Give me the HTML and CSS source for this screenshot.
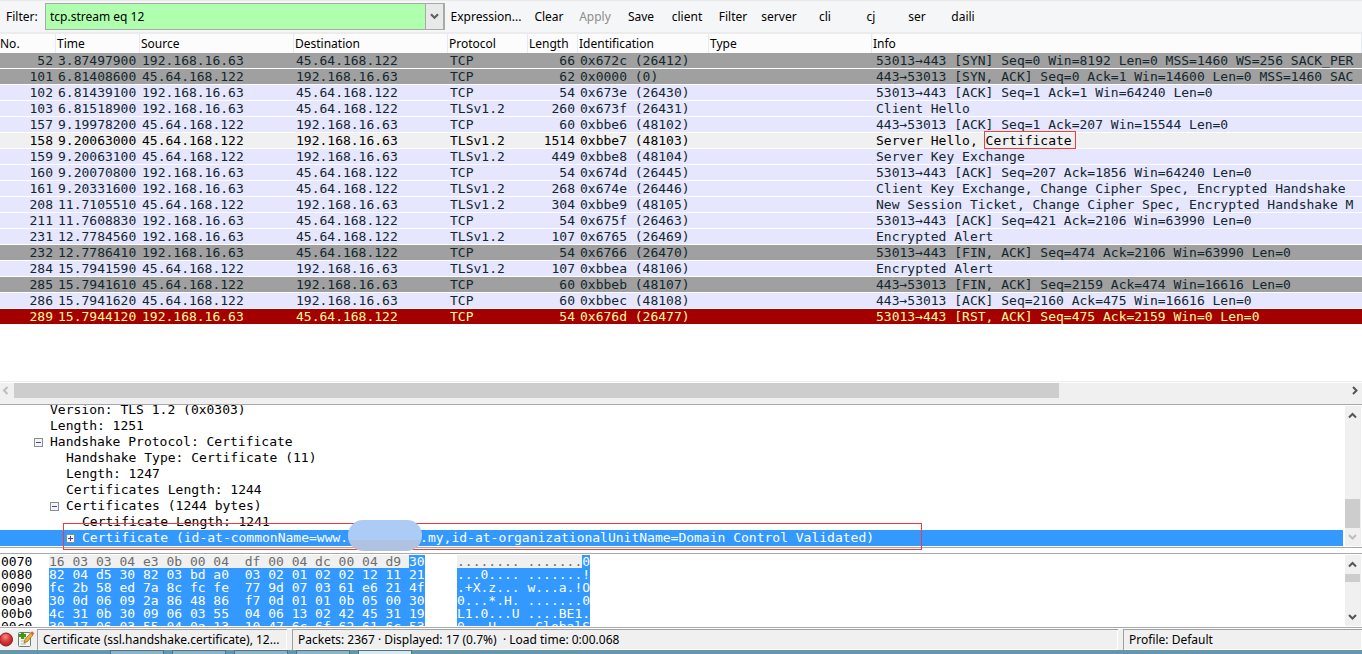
FILE: index.html
```html
<!DOCTYPE html>
<html lang="en">
<head>
<meta charset="utf-8">
<title>Packet capture</title>
<link rel="stylesheet" href="styles.css">
</head>
<body>
<form class="filter-bar">
  <label class="filter-label" for="filter">Filter:</label>
  <div class="combo">
    <input class="combo-input" id="filter" type="text" value="tcp.stream eq 12">
    <button class="combo-toggle" type="button" aria-label="Filter history"><svg width="9" height="7" viewBox="0 0 9 7"><path d="M1 1.2 4.5 4.7 8 1.2" fill="none" stroke="#606060" stroke-width="2.2"/></svg></button>
  </div>
  <div class="filter-actions">
    <button class="action w-expr" type="button">Expression...</button>
    <button class="action w-std" type="button">Clear</button>
    <button class="action w-std" type="button" disabled>Apply</button>
    <button class="action w-std" type="button">Save</button>
    <button class="action w-std" type="button">client</button>
    <button class="action w-std" type="button">Filter</button>
    <button class="action w-std" type="button">server</button>
    <button class="action w-std" type="button">cli</button>
    <button class="action w-std" type="button">cj</button>
    <button class="action w-std" type="button">ser</button>
    <button class="action w-std" type="button">daili</button>
  </div>
</form>

<main class="packets">
  <table class="packet-table">
    <colgroup><col class="c-no"><col class="c-time"><col class="c-addr"><col class="c-addr"><col class="c-proto"><col class="c-len"><col class="c-id"><col class="c-type"><col></colgroup>
    <thead><tr><th>No.</th><th>Time</th><th>Source</th><th>Destination</th><th>Protocol</th><th>Length</th><th>Identification</th><th>Type</th><th>Info</th></tr></thead>
    <tbody>
      <tr class="gray"><td>52</td><td>3.87497900</td><td>192.168.16.63</td><td>45.64.168.122</td><td>TCP</td><td>66</td><td>0x672c (26412)</td><td></td><td>53013→443 [SYN] Seq=0 Win=8192 Len=0 MSS=1460 WS=256 SACK_PER</td></tr>
      <tr class="gray"><td>101</td><td>6.81408600</td><td>45.64.168.122</td><td>192.168.16.63</td><td>TCP</td><td>62</td><td>0x0000 (0)</td><td></td><td>443→53013 [SYN, ACK] Seq=0 Ack=1 Win=14600 Len=0 MSS=1460 SAC</td></tr>
      <tr><td>102</td><td>6.81439100</td><td>192.168.16.63</td><td>45.64.168.122</td><td>TCP</td><td>54</td><td>0x673e (26430)</td><td></td><td>53013→443 [ACK] Seq=1 Ack=1 Win=64240 Len=0</td></tr>
      <tr><td>103</td><td>6.81518900</td><td>192.168.16.63</td><td>45.64.168.122</td><td>TLSv1.2</td><td>260</td><td>0x673f (26431)</td><td></td><td>Client Hello</td></tr>
      <tr><td>157</td><td>9.19978200</td><td>45.64.168.122</td><td>192.168.16.63</td><td>TCP</td><td>60</td><td>0xbbe6 (48102)</td><td></td><td>443→53013 [ACK] Seq=1 Ack=207 Win=15544 Len=0</td></tr>
      <tr class="selected"><td>158</td><td>9.20063000</td><td>45.64.168.122</td><td>192.168.16.63</td><td>TLSv1.2</td><td>1514</td><td>0xbbe7 (48103)</td><td></td><td>Server Hello, <span class="marked">Certificate</span></td></tr>
      <tr><td>159</td><td>9.20063100</td><td>45.64.168.122</td><td>192.168.16.63</td><td>TLSv1.2</td><td>449</td><td>0xbbe8 (48104)</td><td></td><td>Server Key Exchange</td></tr>
      <tr><td>160</td><td>9.20070800</td><td>192.168.16.63</td><td>45.64.168.122</td><td>TCP</td><td>54</td><td>0x674d (26445)</td><td></td><td>53013→443 [ACK] Seq=207 Ack=1856 Win=64240 Len=0</td></tr>
      <tr><td>161</td><td>9.20331600</td><td>192.168.16.63</td><td>45.64.168.122</td><td>TLSv1.2</td><td>268</td><td>0x674e (26446)</td><td></td><td>Client Key Exchange, Change Cipher Spec, Encrypted Handshake</td></tr>
      <tr><td>208</td><td>11.7105510</td><td>45.64.168.122</td><td>192.168.16.63</td><td>TLSv1.2</td><td>304</td><td>0xbbe9 (48105)</td><td></td><td>New Session Ticket, Change Cipher Spec, Encrypted Handshake M</td></tr>
      <tr><td>211</td><td>11.7608830</td><td>192.168.16.63</td><td>45.64.168.122</td><td>TCP</td><td>54</td><td>0x675f (26463)</td><td></td><td>53013→443 [ACK] Seq=421 Ack=2106 Win=63990 Len=0</td></tr>
      <tr><td>231</td><td>12.7784560</td><td>192.168.16.63</td><td>45.64.168.122</td><td>TLSv1.2</td><td>107</td><td>0x6765 (26469)</td><td></td><td>Encrypted Alert</td></tr>
      <tr class="gray"><td>232</td><td>12.7786410</td><td>192.168.16.63</td><td>45.64.168.122</td><td>TCP</td><td>54</td><td>0x6766 (26470)</td><td></td><td>53013→443 [FIN, ACK] Seq=474 Ack=2106 Win=63990 Len=0</td></tr>
      <tr><td>284</td><td>15.7941590</td><td>45.64.168.122</td><td>192.168.16.63</td><td>TLSv1.2</td><td>107</td><td>0xbbea (48106)</td><td></td><td>Encrypted Alert</td></tr>
      <tr class="gray"><td>285</td><td>15.7941610</td><td>45.64.168.122</td><td>192.168.16.63</td><td>TCP</td><td>60</td><td>0xbbeb (48107)</td><td></td><td>443→53013 [FIN, ACK] Seq=2159 Ack=474 Win=16616 Len=0</td></tr>
      <tr><td>286</td><td>15.7941620</td><td>45.64.168.122</td><td>192.168.16.63</td><td>TCP</td><td>60</td><td>0xbbec (48108)</td><td></td><td>443→53013 [ACK] Seq=2160 Ack=475 Win=16616 Len=0</td></tr>
      <tr class="reset"><td>289</td><td>15.7944120</td><td>192.168.16.63</td><td>45.64.168.122</td><td>TCP</td><td>54</td><td>0x676d (26477)</td><td></td><td>53013→443 [RST, ACK] Seq=475 Ack=2159 Win=0 Len=0</td></tr>
    </tbody>
  </table>
</main>

<div class="hscroll">
  <svg class="harrow" width="14" height="15" viewBox="0 0 14 15"><path d="M7.5 4 4 7.5 7.5 11" fill="none" stroke="#bdbdbd" stroke-width="2"/></svg>
  <div class="htrack"><div class="hthumb"></div></div>
  <svg class="harrow" width="14" height="15" viewBox="0 0 14 15"><path d="M5 4 8.500 7.500 5 11" fill="none" stroke="#555" stroke-width="2"/></svg>
</div>

<section class="details">
  <div class="tree">
    <div class="node l1">Version: TLS 1.2 (0x0303)</div>
    <div class="node l1">Length: 1251</div>
    <div class="node l1 branch"><button class="expander" type="button" aria-label="Collapse"></button>Handshake Protocol: Certificate</div>
    <div class="node l2">Handshake Type: Certificate (11)</div>
    <div class="node l2">Length: 1247</div>
    <div class="node l2">Certificates Length: 1244</div>
    <div class="node l2 branch"><button class="expander" type="button" aria-label="Collapse"></button>Certificates (1244 bytes)</div>
    <div class="node l3">Certificate Length: 1241</div>
    <div class="node l3 branch current"><button class="expander plus" type="button" aria-label="Expand"></button>Certificate (id-at-commonName=www.<span class="redacted"></span>.my,id-at-organizationalUnitName=Domain Control Validated)</div>
  </div>
  <div class="vscroll">
    <svg width="16" height="18" viewBox="0 0 16 18"><path d="M4 11.500 7.500 8 11 11.500" fill="none" stroke="#555" stroke-width="2"/></svg>
    <div class="vtrack end"><div class="vthumb tall"></div></div>
    <svg width="16" height="18" viewBox="0 0 16 18"><path d="M4 7 7.500 10.500 11 7" fill="none" stroke="#bdbdbd" stroke-width="2"/></svg>
  </div>
  <div class="mark-box"></div>
  <div class="smudge"></div>
</section>

<section class="bytes">
  <div class="hex">
<pre class="offsets">0070
0080
0090
00a0
00b0
00c0</pre>
<pre class="dump"><span class="dim">16 03 03 04 e3 0b 00 04  df 00 04 dc 00 04 d9 </span><span class="hl">30</span>
<span class="hl">82 04 d5 30 82 03 bd a0  03 02 01 02 02 12 11 21</span>
<span class="hl">fc 2b 58 ed 7a 8c fc fe  77 9d 07 03 61 e6 21 4f</span>
<span class="hl">30 0d 06 09 2a 86 48 86  f7 0d 01 01 0b 05 00 30</span>
<span class="hl">4c 31 0b 30 09 06 03 55  04 06 13 02 42 45 31 19</span>
<span class="hl">30 17 06 03 55 04 0a 13  10 47 6c 6f 62 61 6c 53</span></pre>
<pre><span class="dim">........ .......</span><span class="hl">0</span>
<span class="hl">...0.... .......!</span>
<span class="hl">.+X.z... w...a.!O</span>
<span class="hl">0...*.H. .......0</span>
<span class="hl">L1.0...U ....BE1.</span>
<span class="hl">0...U... .GlobalS</span></pre>
  </div>
  <div class="vscroll">
    <svg width="16" height="18" viewBox="0 0 16 18"><path d="M4 11.500 7.500 8 11 11.500" fill="none" stroke="#555" stroke-width="2"/></svg>
    <div class="vtrack"><div class="vthumb short"></div></div>
    <svg width="16" height="18" viewBox="0 0 16 18"><path d="M4 7 7.500 10.500 11 7" fill="none" stroke="#555" stroke-width="2"/></svg>
  </div>
</section>

<footer class="status">
  <svg class="status-icons" width="37" height="21" viewBox="0 0 37 21">
    <defs><radialGradient id="led" cx=".45" cy=".3" r=".7"><stop offset="0" stop-color="#f58a8a"/><stop offset=".5" stop-color="#dc3a3c"/><stop offset="1" stop-color="#b81c20"/></radialGradient></defs>
    <circle cx="6" cy="10.500" r="6.500" fill="url(#led)" stroke="#8c1a1c"/>
    <rect x="18.500" y="3.500" width="12" height="14" rx="1" fill="#f4f4ee" stroke="#777"/>
    <path d="M21 9h7M21 12h7M21 15h5" stroke="#b5b5b5"/>
    <path d="M22.500 3v7M19 6.500h7" stroke="#3f9a10" stroke-width="3"/>
    <path d="M24 14l1-3.500 5.500-6.500 2.500 2-5.500 6.500z" fill="#f0b030" stroke="#8a6420" stroke-width=".7"/>
    <path d="M30.500 4 32 2.300l2.300 2L33 6z" fill="#df5a55"/>
  </svg>
  <div class="field field-a">Certificate (ssl.handshake.certificate), 12...</div>
  <div class="field field-b">Packets: 2367 · Displayed: 17 (0.7%) &nbsp;· Load time: 0:00.068</div>
  <div class="field field-c">Profile: Default</div>
</footer>
<div class="taskbar"><i class="task"></i><i class="task"></i><i class="task"></i><i class="task"></i><i class="task active"></i></div>
</body>
</html>
```
FILE: styles.css
```css
* { box-sizing: border-box; }
body {
  margin: 0;
  height: 100vh;
  display: flex;
  flex-direction: column;
  overflow: hidden;
  background: #fff;
  color: #000;
  font: 12px/16px "Noto Sans", "Open Sans", sans-serif;
}
button, input { font: inherit; color: inherit; border: 0; padding: 0; margin: 0; background: none; }
svg { display: block; flex: none; }

.filter-bar { display: flex; align-items: center; height: 34px; padding-left: 6px; background: #f5f6f7; border-top: 1px solid #e8e8e8; border-bottom: 2px solid #ececec; flex: none; }
.filter-label { width: 39px; }
.combo { display: flex; width: 400px; height: 27px; border: 1px solid #a9a9a9; background: #afffaf; }
.combo-input { flex: 1; min-width: 0; padding-left: 4px; }
.combo-toggle { width: 19px; display: flex; align-items: center; justify-content: center; background: #e9e9e9; border-left: 1px solid #a9a9a9; border-right: 1px solid #a9a9a9; }
.filter-actions { display: flex; padding-left: 1px; }
.action { height: 24px; text-align: center; }
.action:disabled { color: #8d8d8d; }
.w-expr { width: 80px; }
.w-std { width: 46px; }

.packets { flex: 1; min-height: 0; overflow: hidden; border-bottom: 1px solid #ececec; }
.packet-table { table-layout: fixed; width: 100%; border-collapse: separate; border-spacing: 0; }
.c-no { width: 56px; }
.c-time { width: 84px; }
.c-addr { width: 154px; }
.c-proto { width: 80px; }
.c-len { width: 50px; }
.c-id { width: 131px; }
.c-type { width: 163px; }
.packet-table th { height: 19px; padding: 0 0 0 1px; font-weight: 400; line-height: 18px; text-align: left; border-right: 1px solid #e2ebf5; background: #fcfcfc; white-space: nowrap; }
.packet-table th:first-child { padding: 0; }
.packet-table td { height: 16px; padding: 0 0 0 2px; border-bottom: 1px solid #fff; background: #e6e6ff; color: #12272e; font: 13px/15px "DejaVu Sans Mono", monospace; white-space: nowrap; overflow: hidden; }
.packet-table td:nth-child(1), .packet-table td:nth-child(6) { text-align: right; padding-right: 3px; }
.packet-table td:last-child { padding-left: 4px; }
.packet-table .gray td { background: #a0a0a0; }
.packet-table .selected td { background: #f0f0f0; color: #000; overflow: visible; }
.packet-table .reset td { background: #a40000; color: #fffc9c; }
.marked { position: relative; }
.marked::after { content: ""; position: absolute; inset: -2px -4px -1px -2px; border: 1px solid #f03c3c; }

.hscroll { display: flex; height: 22px; margin-top: 1px; background: #f0f0f0; border-bottom: 1px solid #a8a9ac; flex: none; }
.htrack { flex: 1; }
.hthumb { width: 78.3%; height: 15px; background: #cdcdcd; }

.details { position: relative; display: flex; height: 143px; border-bottom: 1px solid #a8a9ac; flex: none; }
.tree { flex: 1; min-width: 0; height: 141px; overflow: hidden; display: flex; flex-direction: column; justify-content: flex-end; font: 13px/16px "DejaVu Sans Mono", monospace; }
.node { height: 16px; flex: none; white-space: nowrap; display: flex; align-items: center; margin-right: 2px; }
.l1 { padding-left: 50px; }
.l2 { padding-left: 66px; }
.l3 { padding-left: 82px; }
.branch.l1 { padding-left: 34px; }
.branch.l2 { padding-left: 50px; }
.branch.l3 { padding-left: 66px; }
.current { background: #3399ff; color: #fff; }
.redacted { width: 72px; }
.expander { position: relative; width: 9px; height: 9px; margin-right: 7px; border: 1px solid #8c8c8c; background: #f4f4f4; flex: none; }
.expander::before { content: ""; position: absolute; left: 1px; right: 1px; top: 3px; height: 1px; background: #33508c; }
.plus::after { content: ""; position: absolute; top: 1px; bottom: 1px; left: 3px; width: 1px; background: #33508c; }
.vscroll { width: 16px; margin: 1px 1px 1px 0; background: #f0f0f0; display: flex; flex-direction: column; flex: none; }
.vtrack { flex: 1; display: flex; flex-direction: column; }
.end { justify-content: flex-end; }
.vthumb { width: 15px; background: #cdcdcd; }
.tall { height: 29px; }
.short { height: 8px; margin-top: 1px; }
.mark-box { position: absolute; left: 63px; bottom: -3px; width: 859px; height: 27px; border: 1px solid #f03c3c; }
.smudge { position: absolute; left: 348px; bottom: -4px; width: 74px; height: 31px; border-radius: 15px; background: linear-gradient(#accbf5 0 66%, #b0c2e2 66%); }

.bytes { display: flex; height: 75px; margin-top: 5px; border-top: 1px solid #a8a9ac; border-bottom: 1px solid #a8a9ac; flex: none; }
.hex { flex: 1; min-width: 0; display: flex; gap: 24px; overflow: hidden; padding: 1px 0 1px 1px; }
.hex pre { margin: 0; font: 13px/13px "DejaVu Sans Mono", monospace; height: 71px; overflow: hidden; }
.hex .offsets { width: 24px; overflow: visible; clip-path: inset(0 -20px 0 0); }
.hex .dump { width: 384px; }
.dim, .hl { display: inline-block; height: 13px; vertical-align: top; }
.dim { background: #f0f0f0; color: #6d6d6d; }
.hl { background: #3399ff; color: #fff; }

.status { display: flex; height: 21px; margin-top: 1px; background: #f0f0f0; flex: none; }
.field { border: solid #a0a0a0; border-width: 1px 0 0 1px; box-shadow: inset -1px -1px #fff; padding-left: 5px; line-height: 20px; white-space: nowrap; overflow: hidden; }
.field-a { width: 250px; }
.field-b { flex: 1; margin: 0 5px; }
.field-c { width: 239px; }

.taskbar { display: flex; gap: 8px; height: 4px; padding-left: 110px; background: #6795aa; flex: none; }
.task { width: 54px; height: 4px; background: #8fb3c4; border: 1px solid #4d7488; border-bottom: 0; }
.active { background: #dbe8ee; }
```
